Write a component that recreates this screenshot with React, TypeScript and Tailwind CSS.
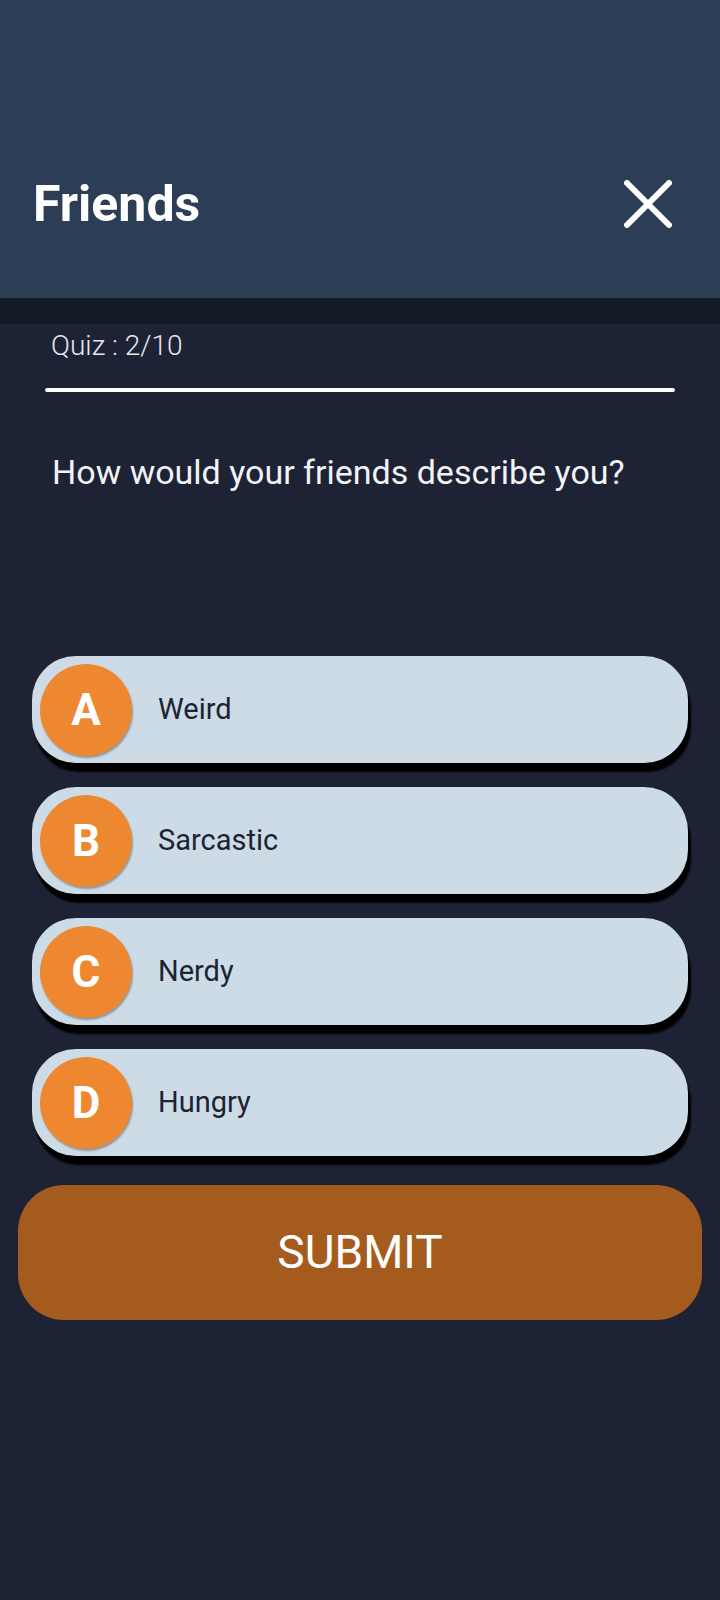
import React, { useState } from 'react';

const options = [
    { key: 'A', label: 'Weird' },
    { key: 'B', label: 'Sarcastic' },
    { key: 'C', label: 'Nerdy' },
    { key: 'D', label: 'Hungry' },
];

const CloseIcon: React.FC = () => (
    <svg width="48" height="48" viewBox="0 0 48 48" fill="none">
        <path d="M3 3 L45 45 M45 3 L3 45" stroke="white" strokeWidth="6" strokeLinecap="round" />
    </svg>
);

export default function App() {
    const [selected, setSelected] = useState<string | null>(null);

    return (
        <div className="w-[720px] min-h-[1600px] bg-[#1e2235] font-['Roboto',sans-serif] flex flex-col">
            {/* Header */}
            <div className="h-[298px] bg-[#2c3e55] flex items-start justify-between pt-[180px] pl-[33px] pr-[48px]">
                <h1 className="text-[50px] leading-[48px] font-bold text-white">Friends</h1>
                <button aria-label="Close">
                    <CloseIcon />
                </button>
            </div>
            <div className="h-[26px] bg-[#141a25]" />

            {/* Body */}
            <div className="flex flex-col pt-[8px]">
                <p className="pl-[51px] text-[28px] leading-[28px] font-light text-[#e6e8ee]">Quiz : 2/10</p>
                <div className="ml-[45px] mt-[28px] w-[630px] h-[4px] rounded-full bg-white" />
                <p className="pl-[52px] mt-[62px] text-[34px] leading-[36px] text-[#f2f3f6]">
                    How would your friends describe you?
                </p>

                <div className="mt-[166px] flex flex-col gap-[24px]">
                    {options.map((opt) => (
                        <button
                            key={opt.key}
                            onClick={() => setSelected(opt.key)}
                            className={`ml-[32px] w-[656px] h-[107px] rounded-[44px] flex items-center pl-[8px] gap-[26px] shadow-[3px_9px_2px_rgba(0,0,0,1)] ${selected === opt.key ? 'bg-[#b9cddc]' : 'bg-[#cddbe6]'}`}
                        >
                            <span className="w-[92px] h-[92px] rounded-full bg-[#ee8830] flex items-center justify-center text-white text-[44px] font-bold shadow-[1px_2px_2px_rgba(0,0,0,0.3)]">
                                {opt.key}
                            </span>
                            <span className="text-[29px] text-[#1c2333]">{opt.label}</span>
                        </button>
                    ))}
                </div>

                <button className="mt-[29px] ml-[18px] w-[684px] h-[135px] rounded-[46px] bg-[#a65b1e] text-white text-[46px] flex items-center justify-center">
                    SUBMIT
                </button>
            </div>
        </div>
    );
}
